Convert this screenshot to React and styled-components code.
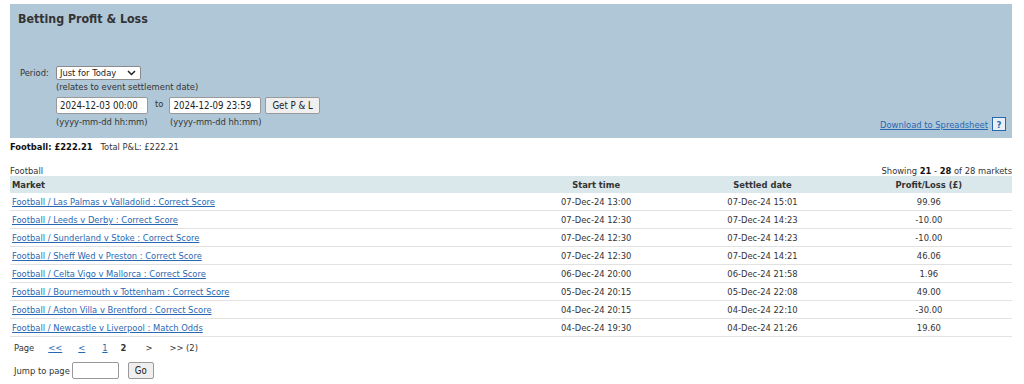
import React from "react";
import styled, { createGlobalStyle } from "styled-components";

const Global = createGlobalStyle`
  html, body { margin: 0; padding: 0; background: #fff; }
  body {
    font-family: "DejaVu Sans Condensed", "DejaVu Sans", sans-serif;
    font-stretch: condensed;
    font-size: 9.3px;
    color: #333;
  }
  * { box-sizing: border-box; }
`;

const Page = styled.div`
  padding: 4px 12px 0 10px;
`;

const Panel = styled.div`
  background: #b0c7d7;
  padding: 8px 6px 10px 8px;
  display: flex;
  flex-direction: column;
`;

const Title = styled.h1`
  margin: 0 0 39px 0;
  font-size: 12.3px;
  line-height: 15px;
  font-weight: bold;
  color: #333;
`;

const PanelBottom = styled.div`
  display: flex;
  justify-content: space-between;
  align-items: flex-end;
`;

const Form = styled.div`
  display: grid;
  grid-template-columns: 36px auto;
  padding-left: 2px;
`;

const Label = styled.div`
  line-height: 14px;
`;

const Controls = styled.div`
  display: flex;
  flex-direction: column;
  align-items: flex-start;
`;

const SelectBox = styled.div`
  width: 85px;
  height: 14px;
  background: #fff;
  border: 1px solid #8a8a8a;
  border-radius: 2px;
  display: flex;
  align-items: center;
  justify-content: space-between;
  padding: 0 4px 0 3px;
  color: #222;
  line-height: 12px;
`;

const Hint = styled.div`
  line-height: 12px;
  margin-top: ${(p) => p.$top || 0}px;
  width: ${(p) => (p.$w ? p.$w + "px" : "auto")};
`;

const DateRow = styled.div`
  display: flex;
  align-items: center;
  margin-top: 4px;
`;

const DateInput = styled.input`
  width: 92px;
  height: 17px;
  border: 1px solid #999;
  border-radius: 2px;
  padding: 0 3px;
  font: inherit;
  font-size: 9.6px;
  color: #222;
  background: #fff;
  outline: none;
`;

const To = styled.span`
  margin: 0 6px 0 7px;
  position: relative;
  top: -2px;
`;

const Button = styled.button`
  height: 17px;
  padding: 0 6px;
  margin-left: ${(p) => p.$ml || 0}px;
  border: 1px solid #999;
  border-radius: 2px;
  background: #efefef;
  font: inherit;
  font-size: 9.6px;
  color: #222;
  line-height: 15px;
`;

const HintRow = styled.div`
  display: flex;
`;

const Download = styled.div`
  display: flex;
  align-items: center;
  gap: 4px;
  margin-bottom: -3px;
`;

const Link = styled.a`
  color: #2868b3;
  text-decoration: underline;
  cursor: pointer;
`;

const Help = styled.span`
  width: 14px;
  height: 14px;
  border: 1px solid #2868b3;
  background: #e8eff5;
  color: #2868b3;
  font-weight: bold;
  display: inline-flex;
  align-items: center;
  justify-content: center;
  font-size: 9.5px;
`;

const Summary = styled.div`
  margin-top: 3px;
  line-height: 12px;
  display: flex;
  gap: 8px;
`;

const Strong = styled.b`
  color: #111;
`;

const TableTop = styled.div`
  margin-top: 14px;
  display: flex;
  justify-content: space-between;
  line-height: 8px;
  margin-bottom: 1px;
`;

const Table = styled.table`
  width: 100%;
  border-collapse: collapse;
`;

const Th = styled.th`
  background: #dbe8eb;
  height: 17px;
  padding: 0 2px;
  font-weight: bold;
  text-align: ${(p) => p.$align || "center"};
  width: ${(p) => p.$w || "auto"};
  color: #333;
`;

const Td = styled.td`
  height: 17.9px;
  padding: 0 2px;
  border-bottom: 1px solid #e2e2e2;
  text-align: ${(p) => p.$align || "center"};
  color: #333;
`;

const Pager = styled.div`
  display: flex;
  align-items: center;
  padding-left: 4px;
  margin-top: 4px;
  line-height: 14px;
`;

const PagerItem = styled.span`
  margin-right: ${(p) => p.$mr}px;
  font-weight: ${(p) => (p.$bold ? "bold" : "normal")};
`;

const Jump = styled.div`
  display: flex;
  align-items: center;
  padding-left: 4px;
  margin-top: 7px;
`;

const JumpInput = styled.input`
  width: 47px;
  height: 17px;
  margin-left: 2px;
  border: 1px solid #999;
  border-radius: 2px;
  font: inherit;
  background: #fff;
`;

const rows = [
  ["Football / Las Palmas v Valladolid : Correct Score", "07-Dec-24 13:00", "07-Dec-24 15:01", "99.96"],
  ["Football / Leeds v Derby : Correct Score", "07-Dec-24 12:30", "07-Dec-24 14:23", "-10.00"],
  ["Football / Sunderland v Stoke : Correct Score", "07-Dec-24 12:30", "07-Dec-24 14:23", "-10.00"],
  ["Football / Sheff Wed v Preston : Correct Score", "07-Dec-24 12:30", "07-Dec-24 14:21", "46.06"],
  ["Football / Celta Vigo v Mallorca : Correct Score", "06-Dec-24 20:00", "06-Dec-24 21:58", "1.96"],
  ["Football / Bournemouth v Tottenham : Correct Score", "05-Dec-24 20:15", "05-Dec-24 22:08", "49.00"],
  ["Football / Aston Villa v Brentford : Correct Score", "04-Dec-24 20:15", "04-Dec-24 22:10", "-30.00"],
  ["Football / Newcastle v Liverpool : Match Odds", "04-Dec-24 19:30", "04-Dec-24 21:26", "19.60"],
];

const Chevron = () => (
  <svg width="9" height="6" viewBox="0 0 9 6">
    <path d="M1 1 L4.5 4.5 L8 1" fill="none" stroke="#222" strokeWidth="1.5" />
  </svg>
);

export default function App() {
  return (
    <>
      <Global />
      <Page>
        <Panel>
          <Title>Betting Profit &amp; Loss</Title>
          <PanelBottom>
            <Form>
              <Label>Period:</Label>
              <Controls>
                <SelectBox>
                  <span>Just for Today</span>
                  <Chevron />
                </SelectBox>
                <Hint $top={1}>(relates to event settlement date)</Hint>
                <DateRow>
                  <DateInput defaultValue="2024-12-03 00:00" />
                  <To>to</To>
                  <DateInput defaultValue="2024-12-09 23:59" />
                  <Button $ml={4}>Get P &amp; L</Button>
                </DateRow>
                <HintRow>
                  <Hint $top={2} $w={114}>(yyyy-mm-dd hh:mm)</Hint>
                  <Hint $top={2}>(yyyy-mm-dd hh:mm)</Hint>
                </HintRow>
              </Controls>
            </Form>
            <Download>
              <Link>Download to Spreadsheet</Link>
              <Help>?</Help>
            </Download>
          </PanelBottom>
        </Panel>
        <Summary>
          <Strong>Football: £222.21</Strong>
          <span>Total P&amp;L: £222.21</span>
        </Summary>
        <TableTop>
          <span>Football</span>
          <span>
            Showing <Strong>21</Strong> - <Strong>28</Strong> of 28 markets
          </span>
        </TableTop>
        <Table>
          <thead>
            <tr>
              <Th $align="left" $w="50.2%">Market</Th>
              <Th $w="16.6%">Start time</Th>
              <Th $w="16.6%">Settled date</Th>
              <Th>Profit/Loss (£)</Th>
            </tr>
          </thead>
          <tbody>
            {rows.map((r) => (
              <tr key={r[0]}>
                <Td $align="left">
                  <Link>{r[0]}</Link>
                </Td>
                <Td>{r[1]}</Td>
                <Td>{r[2]}</Td>
                <Td>{r[3]}</Td>
              </tr>
            ))}
          </tbody>
        </Table>
        <Pager>
          <PagerItem $mr={14}>Page</PagerItem>
          <PagerItem $mr={16}><Link>&lt;&lt;</Link></PagerItem>
          <PagerItem $mr={17}><Link>&lt;</Link></PagerItem>
          <PagerItem $mr={13}><Link>1</Link></PagerItem>
          <PagerItem $mr={19} $bold>2</PagerItem>
          <PagerItem $mr={17}>&gt;</PagerItem>
          <PagerItem $mr={0}>&gt;&gt; (2)</PagerItem>
        </Pager>
        <Jump>
          Jump to page
          <JumpInput />
          <Button $ml={9}>Go</Button>
        </Jump>
      </Page>
    </>
  );
}
